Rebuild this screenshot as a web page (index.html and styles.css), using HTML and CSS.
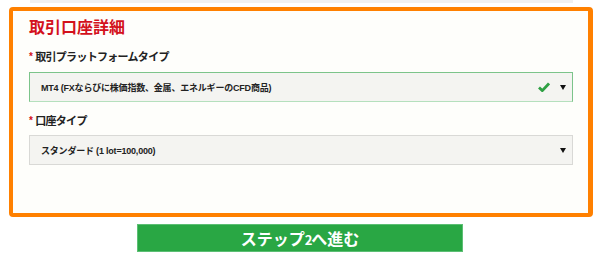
FILE: index.html
```html
<!DOCTYPE html>
<html lang="ja">
  <head>
    <meta charset="UTF-8" />
    <meta name="viewport" content="width=device-width, initial-scale=1.0" />
    <title>取引口座詳細</title>
    <link rel="stylesheet" href="styles.css">
  </head>
  <body>
    <div class="top-strip"></div>

    <div class="panel">
      <h2 class="panel-title">取引口座詳細</h2>

      <div class="field">
        <label class="field-label"><span class="req">*</span>取引プラットフォームタイプ</label>
        <div class="select valid">
          <span class="select-text">MT4 (FXならびに株価指数、金属、エネルギーのCFD商品)</span>
          <svg class="check" width="12" height="10" viewBox="0 0 12 10">
            <path d="M1 5.5 L4.3 8.6 L11 1.4" fill="none" stroke="#2ea043" stroke-width="2.8" />
          </svg>
          <span class="arrow"></span>
        </div>
      </div>

      <div class="field second">
        <label class="field-label"><span class="req">*</span>口座タイプ</label>
        <div class="select">
          <span class="select-text">スタンダード (1 lot=100,000)</span>
          <span class="arrow"></span>
        </div>
      </div>
    </div>

    <button class="next-btn">ステップ<span class="num">2</span>へ進む</button>
  </body>
</html>
```

FILE: styles.css
```css
html,
body {
  margin: 0;
  background: #ffffff;
  font-family: "Liberation Sans", "Noto Sans CJK JP", sans-serif;
}

.top-strip {
  height: 3px;
  margin-left: 30px;
  width: 543px;
  background: #f1f1f1;
}

.panel {
  box-sizing: border-box;
  margin: 4px 0 0 9px;
  width: 584px;
  height: 210px;
  border: 4px solid #ff8000;
  border-right-width: 5px;
  border-radius: 4px;
  background: #fefefb;
  padding: 5px 15px 0 16px;
}

.panel-title {
  margin: 0;
  font-size: 16px;
  line-height: 24px;
  font-weight: bold;
  color: #d3111c;
}

.field {
  margin-top: 7px;
}

.field.second {
  margin-top: 9px;
}

.field-label {
  display: block;
  font-size: 11px;
  line-height: 20px;
  font-weight: bold;
  letter-spacing: -0.7px;
  color: #222;
  margin-bottom: 4px;
}

.second .field-label {
  margin-bottom: 3px;
}

.req {
  color: #d3111c;
  font-size: 10px;
  margin-right: 3px;
  position: relative;
  top: -1px;
}

.select {
  box-sizing: border-box;
  height: 30px;
  display: flex;
  align-items: center;
  padding: 0 6px 0 11px;
  border: 1px solid #d9d9d6;
  background: #f4f4f1;
}

.select.valid {
  border-color: #7cc48a;
  border-bottom-color: #b5e0bd;
}

.select-text {
  flex: 1;
  font-size: 9px;
  font-weight: bold;
  letter-spacing: -0.2px;
  color: #222;
}

.check {
  margin-right: 10px;
}

.arrow {
  width: 0;
  height: 0;
  border-left: 3px solid transparent;
  border-right: 3px solid transparent;
  border-top: 5px solid #111;
}

.next-btn {
  display: block;
  margin: 7px auto 0;
  width: 326px;
  height: 28px;
  border: 1px solid #5cbf74;
  background: #29a744;
  color: #fff;
  font-family: "Noto Sans CJK JP", sans-serif;
  font-size: 16px;
  font-weight: bold;
  line-height: 26px;
  padding: 0;
  cursor: pointer;
}

.next-btn .num {
  font-size: 13px;
  letter-spacing: -1px;
}
```
